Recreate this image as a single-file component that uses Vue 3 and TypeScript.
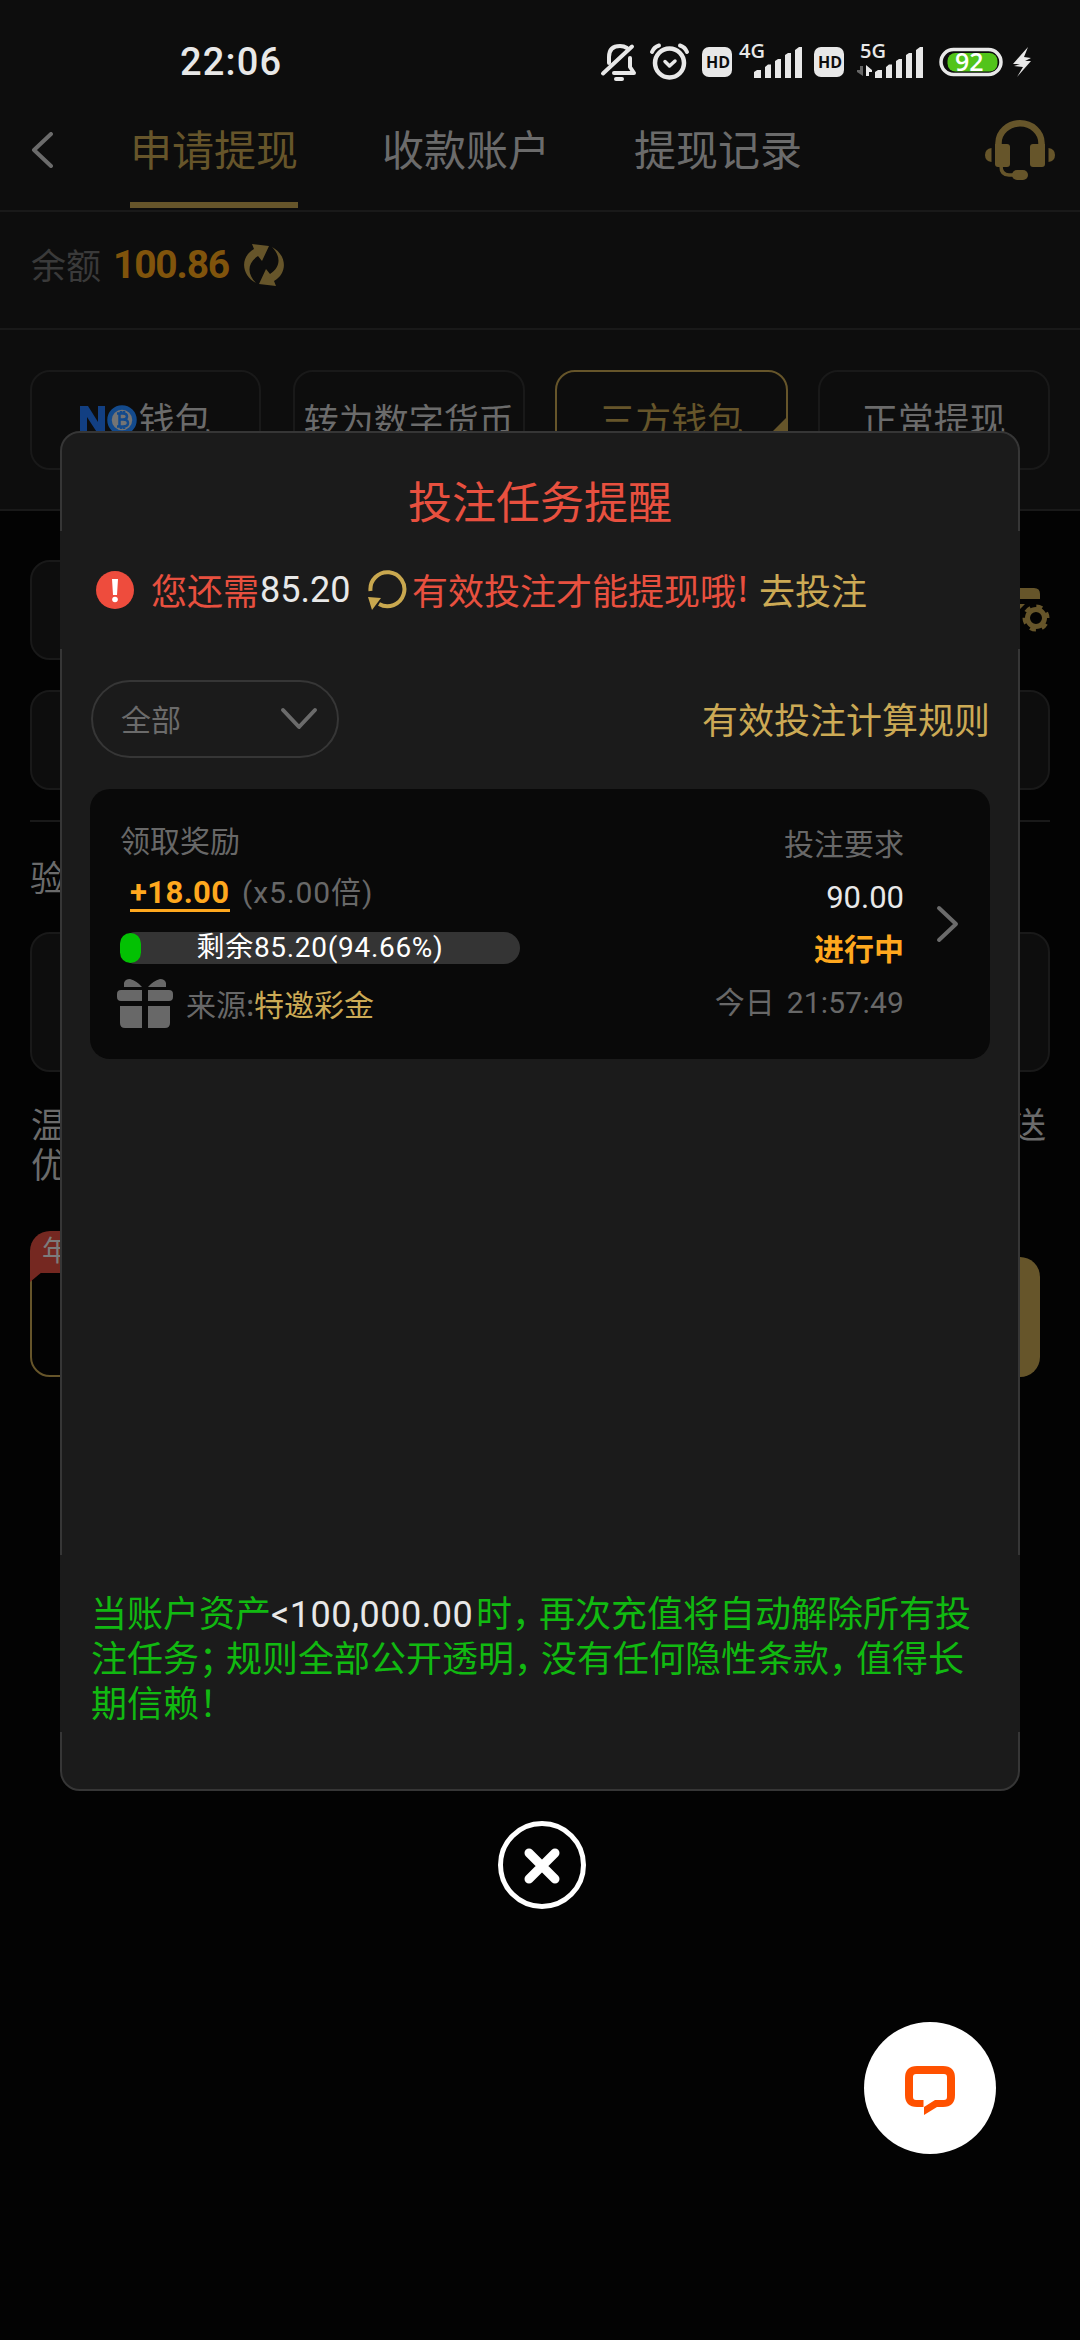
<script setup lang="ts">
interface Tab { label: string; active: boolean }
interface Channel { label: string; kind: 'logo' | 'tight' | 'active' | 'plain' }

const tabs: Tab[] = [
  { label: '申请提现', active: true },
  { label: '收款账户', active: false },
  { label: '提现记录', active: false },
]
const channels: Channel[] = [
  { label: '钱包', kind: 'logo' },
  { label: '转为数字货币', kind: 'tight' },
  { label: '三方钱包', kind: 'active' },
  { label: '正常提现', kind: 'plain' },
]
const progress = 5.34
</script>

<template>
  <div class="screen">
    <header class="status">
      <span class="time">22:06</span>
      <svg class="status-icons" viewBox="0 0 480 60" width="480" height="60">
        <g fill="none" stroke="#e8e8e8" stroke-width="4" stroke-linecap="round" stroke-linejoin="round">
          <path d="M9 33 V27 Q9 16 20 16 Q24 16 27 18" />
          <path d="M3 43.500 L32 16.500" />
          <path d="M14 43 H34 L30 37 V28" />
          <path d="M16 49 H22" />
          <circle cx="69.500" cy="33" r="14.500" stroke-width="4.500" />
          <path d="M65 31.500 L69.500 36 L75 31" stroke-width="3.500" />
          <path d="M52 22 Q54 17 59 15.500" />
          <path d="M87 22 Q85 17 80 15.500" />
        </g>
        <g fill="#e8e8e8">
          <rect x="102" y="17" width="30" height="30" rx="7" />
          <rect x="214" y="17" width="30" height="30" rx="7" />
          <path v-for="o in [154, 275]" :key="o" :d="`M${o} 48 V42 L${o + 3} 40 H${o + 7} V48Z M${o + 11} 48 V37 L${o + 14} 34.500 H${o + 17} V48Z M${o + 21} 48 V31 L${o + 24} 29 H${o + 27} V48Z M${o + 31} 48 V25 L${o + 34} 23 H${o + 37} V48Z M${o + 41} 48 V20 L${o + 45} 17 H${o + 48} V48Z`" />
          <path d="M266 46 V35 L272 40 V42 H269 V46Z" />
          <path d="M428 17 L413 34 H420 L414 36 L423 37 L417 47 L431 31 H425 L431 28 L424 27Z" />
        </g>
        <path d="M263 36 V46 L257 42 V40 H260 V36Z" fill="#666" />
        <rect x="341" y="19.500" width="60" height="25" rx="12.500" fill="none" stroke="#e8e8e8" stroke-width="3.500" />
        <rect x="347.500" y="23" width="50" height="18.500" rx="8" fill="#52c41a" />
        <g class="glyphs">
          <text x="106" y="38" class="hd">HD</text>
          <text x="218" y="38" class="hd">HD</text>
          <text x="139" y="28" class="net">4G</text>
          <text x="260" y="28" class="net">5G</text>
          <text x="355" y="41" class="pct">92</text>
        </g>
      </svg>
    </header>

    <nav class="nav">
      <svg class="back" width="22" height="36" viewBox="0 0 22 36"><path d="M20 2 L3 18 L20 34" fill="none" stroke="#6b6b6b" stroke-width="4" stroke-linecap="round" stroke-linejoin="round" /></svg>
      <div class="tabs">
        <div v-for="t in tabs" :key="t.label" class="tab" :class="{ active: t.active }">{{ t.label }}</div>
      </div>
      <svg class="headset" width="70" height="60" viewBox="0 0 70 60">
        <path d="M13.500 28 V23 A21.500 19.700 0 0 1 56.500 23 V28" fill="none" stroke="#66552a" stroke-width="6.500" />
        <g fill="#66552a">
          <path d="M10 24 H22 Q25 24 25 27 V44 Q25 47 22 47 H13 Q10 47 10 44Z" />
          <path d="M60 24 H48 Q45 24 45 27 V44 Q45 47 48 47 H57 Q60 47 60 44Z" />
          <path d="M6.500 28 V42 Q0 41 0 35 Q0 29 6.500 28Z" />
          <path d="M63.500 28 V42 Q70 41 70 35 Q70 29 63.500 28Z" />
          <rect x="27" y="50" width="16" height="10" rx="5" />
        </g>
        <path d="M16 46 Q16 55 24 55 H30" fill="none" stroke="#66552a" stroke-width="3.500" />
      </svg>
    </nav>

    <section class="balance">
      <span class="balance-label">余额</span>
      <span class="balance-num">100.86</span>
      <svg width="40" height="42" viewBox="0 0 40 42" fill="#66552a">
        <path d="M8 0 L25 2 L18 17 L14 12 C3 19 3 30 12 39 C-3 31 -4 13 10 5Z" />
        <path d="M32 42 L15 40 L22 25 L26 30 C37 23 37 12 28 3 C43 11 44 29 30 37Z" />
      </svg>
    </section>

    <section class="channels">
      <div v-for="c in channels" :key="c.label" class="channel" :class="c.kind">
        <svg v-if="c.kind === 'logo'" class="logo" width="57" height="32" viewBox="0 0 57 32">
          <path d="M0 30 V2 H8 L18 18 V2 H25 V30 H18 L7 13 V30Z" fill="#123f82" />
          <circle cx="42" cy="16" r="12.500" fill="#747474" stroke="#134a8c" stroke-width="4.500" />
          <g fill="none" stroke="#134a8c" stroke-width="2.500">
            <path d="M37 9.500 H43 Q47 9.500 47 12.500 Q47 15.500 43 15.500 H39.500 M43 15.500 Q48 15.500 48 19 Q48 22.500 43 22.500 H37 M39.500 9.500 V22.500 M41 7 V9.500 M44 7 V9.500 M41 22.500 V25 M44 22.500 V25" />
          </g>
        </svg>
        <span>{{ c.label }}</span>
      </div>
    </section>

    <section class="form">
      <div class="field short"></div>
      <svg class="account" width="34" height="46" viewBox="0 0 34 46">
        <path d="M0 0 H18 Q24 0 24 6 V11 H0Z M0 16 H9 L0 25Z" fill="#66552a" />
        <circle cx="20" cy="30" r="8.500" fill="none" stroke="#66552a" stroke-width="5" />
        <circle cx="20" cy="30" r="11.500" fill="none" stroke="#66552a" stroke-width="4" stroke-dasharray="6 6.040" stroke-dashoffset="-6" />
      </svg>
      <div class="field second"></div>
      <div class="rule"></div>
      <div class="code-label">验</div>
      <div class="field code"></div>
      <div class="tips">
        <div class="tip-line"><span>温</span><span>送</span></div>
        <div class="tip-line"><span>优</span></div>
      </div>
      <div class="actions">
        <div class="action outline">
          <span class="tag">年<svg width="12" height="10" viewBox="0 0 12 10"><path d="M0 0 H12 L0 10Z" fill="#752821" /></svg></span>
        </div>
        <div class="action solid"></div>
      </div>
    </section>

    <div class="overlay">
      <div class="dialog">
        <h1 class="title">投注任务提醒</h1>
        <div class="notice">
          <svg class="warn" width="38" height="38" viewBox="0 0 38 38"><circle cx="19" cy="19" r="19" fill="#ee4c3d" /><path d="M16 8 H22 L21 24 H17Z" fill="#fff" /><circle cx="19" cy="28.500" r="2.800" fill="#fff" /></svg>
          <span class="red">您还需</span><span class="amount">85.20</span>
          <svg class="reload" width="39" height="40" viewBox="0 0 39 40"><path d="M2.500 21 A17 17 0 1 1 11 34" fill="none" stroke="#c9a84f" stroke-width="4" /><path d="M0 27 L13 28 L4 40Z" fill="#c9a84f" /></svg>
          <span class="red">有效投注才能提现哦</span><span class="red bang">!</span>
          <span class="gold go">去投注</span>
        </div>
        <div class="body">
          <div class="filter">
            <div class="select">
              <span>全部</span>
              <svg width="38" height="24" viewBox="0 0 38 24"><path d="M3 3 L19 20 L35 3" fill="none" stroke="#6b6b6b" stroke-width="4" stroke-linecap="round" stroke-linejoin="round" /></svg>
            </div>
            <span class="gold rules">有效投注计算规则</span>
          </div>
          <div class="task">
            <div class="left">
              <div class="line reward-label">领取奖励</div>
              <div class="line reward"><span class="plus">+18.00</span><span class="times">(x5.00倍)</span></div>
              <div class="bar">
                <div class="fill" :style="{ width: progress + '%' }"></div>
                <span>剩余85.20(94.66%)</span>
              </div>
              <div class="line source">
                <svg width="56" height="50" viewBox="0 0 56 50" fill="#686868"><path d="M7 8 V4 Q8 0 13 0 Q20 2 25 8Z M49 8 V4 Q48 0 43 0 Q36 2 31 8Z M4 11 H25 V22 H4 Q0 22 0 18 V15 Q0 11 4 11Z M31 11 H52 Q56 11 56 15 V18 Q56 22 52 22 H31Z M3 27 H25 V49 H8 Q3 49 3 44Z M31 27 H53 V44 Q53 49 48 49 H31Z" /></svg>
                <span>来源</span><span class="colon">:</span><span class="gold">特邀彩金</span>
              </div>
            </div>
            <div class="right">
              <div class="line need-label">投注要求</div>
              <div class="line need">90.00</div>
              <div class="line state">进行中</div>
              <div class="line date">今日<span>21:57:49</span></div>
            </div>
            <svg class="more" width="24" height="38" viewBox="0 0 24 38"><path d="M3 3 L20 19 L3 35" fill="none" stroke="#6b6b6b" stroke-width="4" stroke-linecap="round" stroke-linejoin="round" /></svg>
          </div>
        </div>
        <div class="promise">
          <p>当账户资产<b>&lt;100,000.00</b>时<i>，</i>再次充值将自动解除所有投</p>
          <p>注任务<i>；</i>规则全部公开透明<i>，</i>没有任何隐性条款<i>，</i>值得长</p>
          <p>期信赖<i>！</i></p>
        </div>
      </div>
      <svg class="close" width="88" height="88" viewBox="0 0 88 88" fill="none" stroke="#fff"><circle cx="44" cy="44" r="41.500" stroke-width="5" /><path d="M31 32 L57 58 M57 32 L31 58" stroke-width="9" stroke-linecap="round" /></svg>
    </div>

    <div class="chat">
      <svg width="50" height="49" viewBox="0 0 50 49"><path d="M12 0 H38 Q50 0 50 12 V29 Q50 41 38 41 H32 L19 49 V41 L30 34 H39 Q42 34 42 31 V11 Q42 8 39 8 H11 Q8 8 8 11 V31 Q8 34 11 34 H18.500 V41 H12 Q0 41 0 29 V12 Q0 0 12 0Z" fill="#ff5100" /></svg>
    </div>
  </div>
</template>

<style>
body { background: #030303; }
</style>

<style scoped>
* { box-sizing: border-box; }
.screen {
  position: relative;
  width: 1080px;
  height: 2340px;
  overflow: hidden;
  background: #030303;
  font-family: "Noto Sans CJK SC", sans-serif;
  color: #6b6b6b;
}
svg { display: block; flex: none; }
i { font-style: normal; }
.status { height: 110px; background: #0d0d0d; display: flex; align-items: flex-start; padding: 30px 0 0 180px; }
.time { width: 100px; margin-right: 320px; font: 500 38px/64px Roboto, sans-serif; letter-spacing: 1.200px; color: #e8e8e8; white-space: nowrap; }
.glyphs { font-family: "Open Sans", sans-serif; }
.hd { font-size: 16px; font-weight: 700; fill: #0d0d0d; }
.net { font-size: 20px; font-weight: 600; fill: #e8e8e8; }
.pct { font-size: 25px; font-weight: 600; fill: #fff; }

.nav { height: 102px; background: #0d0d0d; border-bottom: 2px solid #191919; display: flex; align-items: flex-start; padding: 0 25px 0 31px; }
.back { margin-top: 22px; }
.tabs { display: flex; gap: 84px; margin-left: 77px; }
.tab { width: 168px; height: 98px; font-size: 42px; line-height: 76px; white-space: nowrap; }
.tab.active { color: #66552a; border-bottom: 6px solid #66552a; }
.headset { margin: 10px 0 0 auto; }

.balance { height: 118px; background: #0d0d0d; border-bottom: 2px solid #191919; display: flex; align-items: center; padding: 0 31px 10px; }
.balance-label { font-size: 35px; line-height: 40px; color: #3a3a3a; padding-bottom: 2px; }
.balance-num { width: 117px; margin: 0 14px 0 12px; font: 700 39px/40px Roboto, sans-serif; letter-spacing: -1.200px; color: #80540c; }

.channels { height: 181px; background: #0d0d0d; border-bottom: 2px solid #191919; padding: 40px 30px 0; display: grid; grid-template-columns: repeat(4, 1fr); gap: 30px; }
.channel { position: relative; height: 100px; border: 2px solid #191919; border-radius: 20px; display: flex; justify-content: center; align-items: center; font-size: 36px; white-space: nowrap; overflow: hidden; }
.channel span { padding-bottom: 4px; }
.channel.tight { font-size: 35px; }
.channel.active { color: #66552a; border-color: #66552a; }
.channel.active::after { content: ""; position: absolute; right: 0; bottom: 0; border-left: 50px solid transparent; border-bottom: 50px solid #66552a; }
.logo { margin-right: 2px; }

.form { padding: 49px 30px 0; display: grid; grid-template-columns: 1fr 66px; }
.field { height: 100px; background: #0d0d0d; border: 2px solid #191919; border-radius: 20px; }
.account { margin: 28px 0 0 32px; }
.second { grid-column: 1 / 3; margin-top: 30px; }
.rule { grid-column: 1 / 3; height: 2px; margin-top: 30px; background: #191919; }
.code-label { grid-column: 1 / 3; height: 110px; padding-top: 34px; font-size: 35px; line-height: 40px; }
.code { grid-column: 1 / 3; height: 140px; }
.tips { grid-column: 1 / 3; padding: 31px 4px 2px 1px; font-size: 35px; }
.tip-line { display: flex; justify-content: space-between; line-height: 40px; height: 40px; }
.actions { grid-column: 1 / 3; display: flex; gap: 30px; padding: 72px 10px 0 0; }
.action { flex: 1; height: 120px; border-radius: 20px; }
.outline { border: 2px solid #66552a; position: relative; }
.solid { background: #66552a; }
.tag { position: absolute; left: -2px; top: -28px; width: 120px; height: 42px; padding-left: 12px; border-radius: 20px 20px 0 0; background: #752821; font-size: 28px; line-height: 37px; color: #7c7c7c; }
.tag svg { position: absolute; left: 0; top: 41px; }

.overlay { position: absolute; inset: 0; padding-top: 431px; display: flex; flex-direction: column; align-items: center; }
.dialog { width: 960px; height: 1360px; border: 2px solid #363636; border-radius: 20px; background: #1b1b1b; display: flex; flex-direction: column; }
.title { margin: 0; height: 98px; padding-top: 32px; text-align: center; font-weight: 400; font-size: 44px; line-height: 70px; color: #e8503f; }
.notice { height: 118px; margin: 0 -2px; padding: 0 36px; background: #1b1b1b; display: flex; align-items: center; font-size: 36px; line-height: 52px; white-space: nowrap; }
.notice span { padding-bottom: 3px; }
.warn { margin-right: 17px; }
.red { color: #e8503f; }
.gold { color: #ccaa55; }
.notice .amount { width: 92px; font-family: Roboto, sans-serif; padding-bottom: 0; color: #e8e8e8; margin: 0 16px 0 1px; }
.reload { margin-right: 5px; }
.bang { width: 12px; margin: 0 9px 0 2px; font-family: "Noto Sans", sans-serif; }
.body { flex: 1; padding: 31px 28px 0; }
.filter { display: flex; justify-content: space-between; align-items: center; height: 78px; }
.select { width: 248px; height: 78px; margin-left: 1px; border: 2px solid #363636; border-radius: 39px; display: flex; align-items: center; justify-content: space-between; padding: 0 19px 0 28px; font-size: 30px; }
.select span { padding-bottom: 2px; }
.rules { font-size: 36px; line-height: 50px; padding-bottom: 2px; }
.task { margin-top: 31px; height: 270px; border-radius: 20px; background: #090909; display: flex; padding: 0 30px; font-size: 30px; color: #686868; }
.left { width: 400px; }
.right { flex: 1; text-align: right; }
.line { white-space: nowrap; }
.reward-label { line-height: 40px; margin-top: 30px; }
.reward { display: flex; align-items: center; height: 40px; margin: 15px 0 18px 10px; }
.plus { width: 100px; height: 36px; border-bottom: 3px solid #ffa81e; font: 700 31px/33px Roboto, sans-serif; letter-spacing: 0.400px; color: #ffa81e; }
.times { margin-left: 12px; letter-spacing: 0.900px; line-height: 38px; padding-bottom: 3px; font-family: Roboto, "Noto Sans CJK SC", sans-serif; }
.bar { position: relative; height: 32px; border-radius: 16px; background: #343434; text-align: center; font-family: Roboto, "Noto Sans CJK SC", sans-serif; font-size: 28px; line-height: 32px; letter-spacing: 0.700px; color: #fff; white-space: nowrap; }
.bar span { position: relative; }
.fill { position: absolute; left: 0; top: 1px; height: 30px; border-radius: 11px; background: #03c103; }
.source { display: flex; align-items: center; height: 50px; margin: 15px 0 0 -3px; line-height: 44px; }
.source span { padding-bottom: 3px; }
.source svg { margin-right: 13px; }
.colon { width: 8px; }
.need-label { margin-top: 33px; line-height: 40px; }
.need { margin-top: 16px; line-height: 40px; color: #e8e8e8; font-family: Roboto, sans-serif; font-size: 31px; }
.state { margin-top: 9px; line-height: 40px; font-weight: 700; color: #ffa81e; }
.date { margin-top: 13px; line-height: 40px; }
.date span { margin-left: 12px; font-family: Roboto, sans-serif; letter-spacing: 0.200px; }
.more { margin: 116px 0 0 32px; }
.promise { height: 177px; margin: 0 -2px 57px; padding: 34px 31px 0; background: #1b1b1b; color: #11b911; font-size: 36px; line-height: 45px; }
.promise p { margin: 0; white-space: nowrap; height: 45px; }
.promise b { display: inline-block; width: 205px; font-weight: 400; font-family: Roboto, sans-serif; color: #e8e8e8; letter-spacing: 0.500px; }
.promise i { margin-right: -9px; }
.close { margin: 30px 0 0 4px; }
.chat { position: absolute; left: 864px; top: 2022px; width: 132px; height: 132px; border-radius: 50%; background: #fff; display: flex; align-items: center; justify-content: center; padding-top: 4px; }
</style>
